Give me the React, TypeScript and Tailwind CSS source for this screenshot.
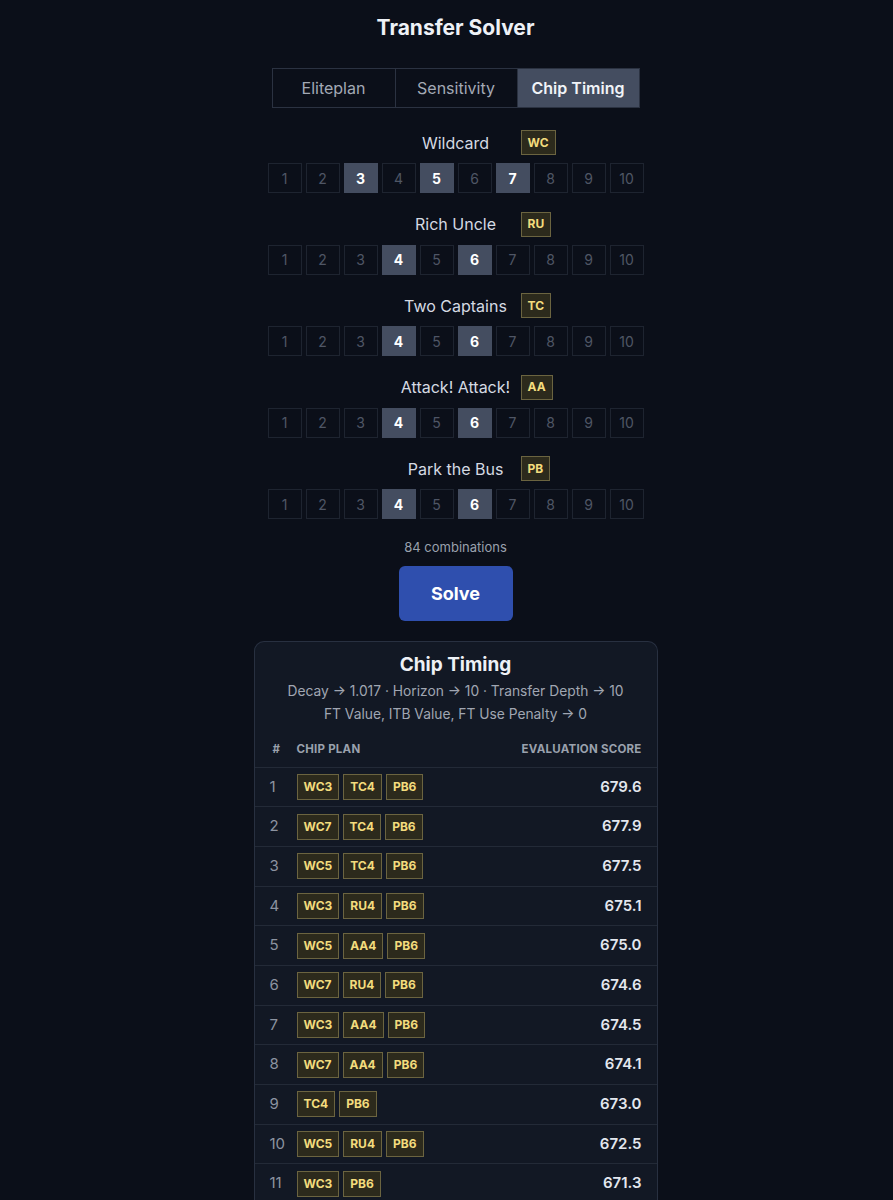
import { JSX } from "react";

type Chip = {
  name: string;
  code: string;
  picked: number[];
};

const CHIPS: Chip[] = [
  { name: "Wildcard", code: "WC", picked: [3, 5, 7] },
  { name: "Rich Uncle", code: "RU", picked: [4, 6] },
  { name: "Two Captains", code: "TC", picked: [4, 6] },
  { name: "Attack! Attack!", code: "AA", picked: [4, 6] },
  { name: "Park the Bus", code: "PB", picked: [4, 6] },
];

const RESULTS: { plan: string[]; score: string }[] = [
  { plan: ["WC3", "TC4", "PB6"], score: "679.6" },
  { plan: ["WC7", "TC4", "PB6"], score: "677.9" },
  { plan: ["WC5", "TC4", "PB6"], score: "677.5" },
  { plan: ["WC3", "RU4", "PB6"], score: "675.1" },
  { plan: ["WC5", "AA4", "PB6"], score: "675.0" },
  { plan: ["WC7", "RU4", "PB6"], score: "674.6" },
  { plan: ["WC3", "AA4", "PB6"], score: "674.5" },
  { plan: ["WC7", "AA4", "PB6"], score: "674.1" },
  { plan: ["TC4", "PB6"], score: "673.0" },
  { plan: ["WC5", "RU4", "PB6"], score: "672.5" },
  { plan: ["WC3", "PB6"], score: "671.3" },
];

const TABS = ["Eliteplan", "Sensitivity", "Chip Timing"];

function Badge({ label, wide }: { label: string; wide?: boolean }): JSX.Element {
  return (
    <span
      className={`inline-flex items-center justify-center border border-[#6b6440] bg-[#2c2a1c] text-[12px] font-bold text-[#f3dc7d] ${
        wide ? "h-[26px] px-[6px]" : "h-[25px] px-[6px]"
      }`}
    >
      {label}
    </span>
  );
}

function ChipRow({ chip }: { chip: Chip }): JSX.Element {
  return (
    <div className="flex flex-col items-center">
      <div className="grid h-[25px] w-full grid-cols-[1fr_124px_1fr] items-center">
        <div />
        <div className="whitespace-nowrap text-center text-[16px] text-[#d5dae3]">
          {chip.name}
        </div>
        <div className="flex justify-start pl-[3px]">
          <Badge label={chip.code} />
        </div>
      </div>
      <div className="mt-[8px] grid grid-cols-[repeat(10,34px)] gap-[4px]">
        {Array.from({ length: 10 }, (_, i) => i + 1).map((n) => {
          const on = chip.picked.includes(n);
          return (
            <div
              key={n}
              className={
                on
                  ? "flex h-[30px] items-center justify-center bg-[#444d60] text-[14px] font-bold text-white"
                  : "flex h-[30px] items-center justify-center border border-[#1e2430] text-[14px] text-[#4f5665]"
              }
            >
              {n}
            </div>
          );
        })}
      </div>
    </div>
  );
}

export default function App(): JSX.Element {
  return (
    <div
      className="h-[1200px] overflow-hidden bg-[#0b0f19] pl-[18px] text-[#e5e7eb]"
      style={{ fontFamily: "Inter, 'Noto Sans', sans-serif" }}
    >
      <div className="flex flex-col items-center pt-[14px]">
        <h1 className="text-[21px] font-bold leading-[28px] text-[#eef1f6]">
          Transfer Solver
        </h1>

        <div className="mt-[26px] flex border border-[#2b3241]">
          {TABS.map((tab, i) => (
            <div
              key={tab}
              className={`flex h-[38px] w-[122px] items-center justify-center text-[16px] ${
                i > 0 ? "border-l border-[#2b3241]" : ""
              } ${
                tab === "Chip Timing"
                  ? "bg-[#444d60] font-semibold text-[#f1f3f7]"
                  : "text-[#a3a9b5]"
              }`}
            >
              {tab}
            </div>
          ))}
        </div>

        <div className="mt-[22px] flex flex-col gap-[18.5px]">
          {CHIPS.map((chip) => (
            <ChipRow key={chip.code} chip={chip} />
          ))}
        </div>

        <div className="mt-[19px] text-[13px] text-[#9aa1ad]">84 combinations</div>

        <button className="mt-[8px] flex h-[55px] w-[114px] items-center justify-center rounded-[6px] bg-[#2f4fae] text-[18px] font-bold text-white">
          Solve
        </button>

        <div className="mt-[20px] w-[404px] rounded-t-[10px] border border-b-0 border-[#283040] bg-[#121824]">
          <div className="pt-[10px] text-center text-[19px] font-bold leading-[26px] text-[#eef1f6]">
            Chip Timing
          </div>
          <div className="mt-[2px] text-center text-[13.8px] leading-[23px] text-[#a0a6b2]">
            Decay → 1.017 · Horizon → 10 · Transfer Depth → 10
          </div>
          <div className="text-center text-[13.8px] leading-[23px] text-[#a0a6b2]">
            FT Value, ITB Value, FT Use Penalty → 0
          </div>

          <div className="mt-[7px] flex h-[34px] items-center px-[15px] text-[11.5px] font-bold tracking-[0.02em] text-[#9aa1ad]">
            <div className="w-[27px] pl-[3px]">#</div>
            <div className="flex-1">CHIP PLAN</div>
            <div>EVALUATION SCORE</div>
          </div>

          {RESULTS.map((r, i) => (
            <div
              key={i}
              className="flex h-[39.7px] items-center border-t border-[#232a37] px-[15px]"
            >
              <div className="w-[27px] text-[15px] text-[#8c93a0]">{i + 1}</div>
              <div className="flex flex-1 gap-[4px]">
                {r.plan.map((p) => (
                  <Badge key={p} label={p} wide />
                ))}
              </div>
              <div className="text-[15px] font-semibold text-[#e3e7ee]">{r.score}</div>
            </div>
          ))}
        </div>
      </div>
    </div>
  );
}
